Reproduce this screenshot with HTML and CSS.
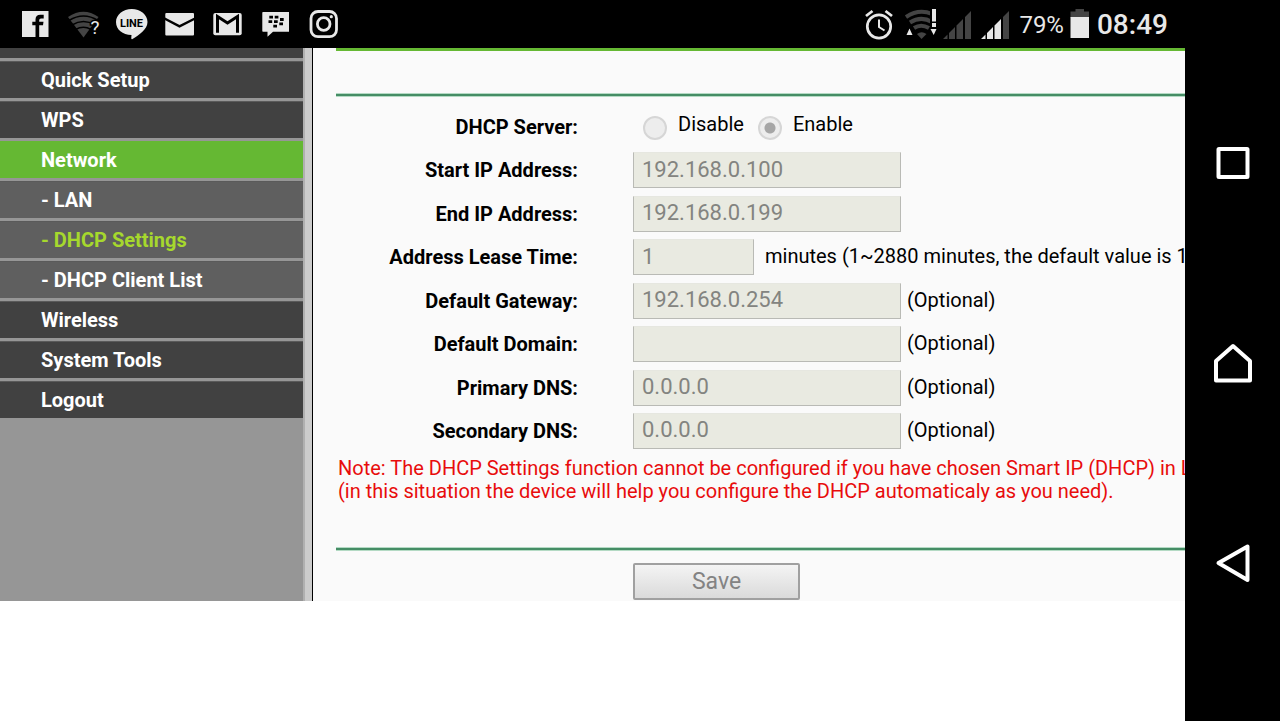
FILE: index.html
```html
<!DOCTYPE html>
<html lang="en">
<head>
<meta charset="utf-8">
<meta name="viewport" content="width=device-width, initial-scale=1">
<title>DHCP Settings</title>
<link rel="stylesheet" href="styles.css">
</head>
<body>
<div class="device">
  <div class="screen">
    <header class="status">
      <div class="status-group">
        <svg class="notif" viewBox="0 0 48 48" aria-label="Facebook"><rect x="11" y="11" width="26.500" height="26" fill="#e8e8e8"/><path d="M24.500 37V25.300H21.300V21.700H24.500V19.500Q24.500 14.800 29.300 14.800H32.700V18.400H30Q28.200 18.400 28.200 20.200V21.700H32.500L32 25.300H28.200V37Z" fill="#000"/></svg>
        <svg class="notif" viewBox="0 0 48 48" aria-label="Wi-Fi available"><path d="M9 17Q24.500 6.500 39.500 17L24.500 37.500Z" fill="#444"/><path d="M10 20.500Q24.500 11.500 39 20.500M13 25Q24.500 18 36 25M16.500 29.500Q24.500 25 32 29.500" fill="none" stroke="#000" stroke-width="1.500"/><text x="36" y="34" class="question">?</text></svg>
        <svg class="notif" viewBox="0 0 48 48" aria-label="LINE"><path d="M24.700 9C33.500 9 40.500 14.800 40.500 22C40.500 29.500 32 35 25.500 39Q24 39.700 24.300 37.500L24.500 35C15.500 35 9 29.500 9 22C9 14.800 16 9 24.700 9Z" fill="#e8e8e8"/><text x="24.500" y="26.500" class="line-logo">LINE</text></svg>
        <svg class="notif" viewBox="0 0 48 48" aria-label="Mail"><rect x="10.300" y="13" width="28.700" height="22.500" rx="1" fill="#e8e8e8"/><path d="M9.500 18.500L24.500 26.300L40 18.500" fill="none" stroke="#000" stroke-width="2.500"/></svg>
        <svg class="notif" viewBox="0 0 48 48" aria-label="Gmail"><rect x="10.300" y="13" width="28.400" height="22.300" rx="2" fill="#e8e8e8"/><path d="M14.500 32.700V16.500L24.500 23L34.500 16.500V32.700" fill="none" stroke="#000" stroke-width="3"/></svg>
        <svg class="notif" viewBox="0 0 48 48" aria-label="BBM"><path d="M12 12H38V31.700H22L16.500 36.700V31.700H12Q11.300 31.700 11.300 31V12.700Q11.300 12 12 12Z" fill="#e8e8e8"/><path d="M18.300 17.200H22M23.700 17.200H27.400M17.500 21.700H21.200M23 21.700H26.700M29 19.500H32.700M28.300 23.800H32M22.300 26.200H26" stroke="#000" stroke-width="2.800"/></svg>
        <svg class="notif" viewBox="0 0 48 48" aria-label="Instagram"><rect x="12" y="11.500" width="25.500" height="25.200" rx="7" fill="none" stroke="#e8e8e8" stroke-width="2.800"/><circle cx="24.700" cy="24" r="6.300" fill="none" stroke="#e8e8e8" stroke-width="2.800"/><circle cx="32.300" cy="16.700" r="1.600" fill="#e8e8e8"/></svg>
      </div>
      <div class="status-group status-right">
        <svg class="alarm" viewBox="0 0 28 32" aria-label="Alarm"><circle cx="14" cy="18.500" r="11.700" fill="none" stroke="#e8e8e8" stroke-width="2.700"/><path d="M14 11.500V19L19.500 22.500" fill="none" stroke="#e8e8e8" stroke-width="2"/><path d="M1 8L7.500 3M20.500 3L27 8" stroke="#e8e8e8" stroke-width="2.800"/></svg>
        <svg class="wifi" viewBox="0 0 32 32" aria-label="Wi-Fi limited"><path d="M1 9Q14 0.500 27 6M5 14.500Q16 7.500 27 14M9 20Q16 15.500 24 20" fill="none" stroke="#444" stroke-width="4"/><path d="M12 26Q16.500 22.500 21.500 26L16.500 31Z" fill="#444"/><path d="M25 0H32V20H25Z" fill="#000"/><path d="M27 1H31V13.500H27ZM27 15H31V19H27ZM1.500 27L4.500 20.500L7.500 27ZM25.500 21L31.500 21L28.700 27Z" fill="#e8e8e8"/></svg>
        <svg class="signal" viewBox="0 0 28 28" aria-label="SIM 1 no signal"><path d="M0 28L4.500 23.500V28ZM6 22L12 16V28H6ZM13.500 14.500L20 8V28H13.500ZM22 6L28 0V28H22Z" fill="#444"/></svg>
        <svg class="signal" viewBox="0 0 28 28" aria-label="SIM 2 signal"><path d="M0 28L4.500 23.500V28ZM6 22L12 16V28H6ZM13.500 14.500L20 8V28H13.500Z" fill="#e8e8e8"/><path d="M22 6L28 0V28H22Z" fill="#444"/></svg>
        <span class="percent">79%</span>
        <svg class="battery" viewBox="0 0 20 30" aria-label="Battery"><path d="M5.500 0H14V2.500H19V9H0.500V2.500H5.500Z" fill="#444"/><rect x="0.500" y="8" width="18.500" height="21" fill="#e8e8e8"/></svg>
        <time class="clock">08:49</time>
      </div>
    </header>

    <div class="page">
      <nav class="menu" aria-label="Router menu">
        <span class="menu-cut"></span>
        <a class="item" href="#quick">Quick Setup</a>
        <a class="item" href="#wps">WPS</a>
        <a class="item active" href="#network">Network</a>
        <a class="item sub" href="#lan">- LAN</a>
        <a class="item sub current" href="#dhcp">- DHCP Settings</a>
        <a class="item sub" href="#clients">- DHCP Client List</a>
        <a class="item" href="#wireless">Wireless</a>
        <a class="item" href="#tools">System Tools</a>
        <a class="item" href="#logout">Logout</a>
      </nav>
      <div class="divider"></div>
      <main class="content">
        <form class="settings">
          <hr class="rule">
          <div class="rows">
            <div class="row" role="radiogroup" aria-labelledby="server">
              <span class="label" id="server">DHCP Server:</span>
              <span class="radios">
                <label class="choice"><input class="radio" type="radio" name="server" disabled><span class="choice-text">Disable</span></label>
                <label class="choice"><input class="radio" type="radio" name="server" checked disabled><span class="choice-text">Enable</span></label>
              </span>
            </div>
            <div class="row"><label class="label" for="start">Start IP Address:</label><input class="field" id="start" type="text" value="192.168.0.100" disabled></div>
            <div class="row"><label class="label" for="end">End IP Address:</label><input class="field" id="end" type="text" value="192.168.0.199" disabled></div>
            <div class="row"><label class="label" for="lease">Address Lease Time:</label><input class="field short" id="lease" type="text" value="1" disabled><span class="hint lease-hint">minutes (1~2880 minutes, the default value is 1</span></div>
            <div class="row"><label class="label" for="gateway">Default Gateway:</label><input class="field" id="gateway" type="text" value="192.168.0.254" disabled><span class="hint">(Optional)</span></div>
            <div class="row"><label class="label" for="domain">Default Domain:</label><input class="field" id="domain" type="text" value="" disabled><span class="hint">(Optional)</span></div>
            <div class="row"><label class="label" for="dns1">Primary DNS:</label><input class="field" id="dns1" type="text" value="0.0.0.0" disabled><span class="hint">(Optional)</span></div>
            <div class="row"><label class="label" for="dns2">Secondary DNS:</label><input class="field" id="dns2" type="text" value="0.0.0.0" disabled><span class="hint">(Optional)</span></div>
          </div>
          <p class="note">Note: The DHCP Settings function cannot be configured if you have chosen Smart IP (DHCP) in L<br>(in this situation the device will help you configure the DHCP automaticaly as you need).</p>
          <hr class="rule">
          <button class="save" type="button" disabled>Save</button>
        </form>
      </main>
    </div>
  </div>

  <nav class="system" aria-label="System navigation">
    <button class="key" type="button" aria-label="Recent apps"><svg viewBox="0 0 40 40"><rect x="5.500" y="6" width="29" height="28" rx="0.500"/></svg></button>
    <button class="key" type="button" aria-label="Home"><svg viewBox="0 0 40 40"><path d="M20 3L37 18V37.500H3V18Z"/></svg></button>
    <button class="key" type="button" aria-label="Back"><svg viewBox="0 0 40 40"><path d="M5.500 20L34.500 3.500V37Z"/></svg></button>
  </nav>
</div>
</body>
</html>
```
FILE: styles.css
```css
* {
  box-sizing: border-box;
}

body {
  margin: 0;
  background: #fff;
  color: #000;
  font-family: Roboto, "Noto Sans", sans-serif;
  font-size: 20px;
  line-height: 24px;
}

.device {
  display: flex;
  min-height: 100vh;
}

.screen {
  flex: 1;
  min-width: 0;
}

/* Status bar */
.status {
  display: flex;
  align-items: center;
  justify-content: space-between;
  height: 48px;
  padding: 0 17px 0 11px;
  background: #000;
  color: #e8e8e8;
}

.status-group {
  display: flex;
  align-items: center;
}

.notif {
  width: 48px;
  height: 48px;
}

.question {
  fill: #e8e8e8;
  font-size: 19px;
  text-anchor: middle;
  stroke: #000;
  stroke-width: 3px;
  paint-order: stroke;
}

.line-logo {
  fill: #000;
  font-size: 11px;
  font-weight: 700;
  text-anchor: middle;
}

.alarm {
  width: 28px;
  height: 32px;
  margin-right: 12px;
}

.wifi {
  width: 32px;
  height: 32px;
  margin-right: 6px;
}

.signal {
  width: 28px;
  height: 28px;
  margin: 2px 10px 0 0;
}

.percent {
  padding-top: 2px;
  margin-right: 6px;
  font-size: 24px;
}

.battery {
  width: 20px;
  height: 30px;
  margin-right: 7px;
}

.clock {
  padding-top: 2px;
  font-size: 28px;
  font-weight: 500;
}

/* Router page */
.page {
  display: flex;
}

.menu {
  display: flex;
  flex-direction: column;
  gap: 3px;
  width: 303px;
  background: #969696;
}

.menu-cut {
  height: 10px;
  background: #414141;
}

.item {
  height: 37px;
  padding-left: 41px;
  border-top: 1px solid #5a5a5a;
  background: #414141;
  color: #fff;
  font-weight: 700;
  line-height: 36px;
  text-decoration: none;
}

.item.active {
  border-color: #65b833;
  background: #65b833;
}

.item.sub {
  background: #5f5f5f;
}

.item.current {
  color: #a6d82d;
}

.divider {
  width: 10px;
  border-left: 2px solid #b0b0b0;
  border-right: 1px solid #000;
  background: #ccc;
}

.content {
  flex: 1;
  min-width: 0;
  padding-left: 23px;
  background: #fafafa;
  overflow: hidden;
}

.settings {
  padding-bottom: 1px;
  border-top: 3px solid #65b833;
}

.rule {
  height: 4px;
  margin: 42px 0 12px;
  border: 1px solid #b4dac4;
  border-width: 1px 0;
  background: #458d65;
}

.rows {
  display: grid;
  align-content: space-between;
  min-height: 340px;
}

.row {
  display: flex;
  align-items: center;
  height: 36px;
}

.label {
  flex: none;
  width: 242px;
  margin-right: 55px;
  font-weight: 700;
  text-align: right;
  white-space: nowrap;
}

.radios {
  display: flex;
  gap: 14px;
  padding-left: 10px;
}

.choice {
  display: flex;
  gap: 11px;
}

.choice-text {
  line-height: 20px;
}

.radio {
  appearance: none;
  width: 24px;
  height: 24px;
  margin: 2px 0 0;
  border: 2px solid #d6d6d6;
  border-radius: 50%;
  background: #ededed;
}

.radio:checked {
  background: radial-gradient(circle, #a6a6a6 5px, #ededed 6px);
}

.field {
  flex: none;
  width: 268px;
  height: 36px;
  padding: 0 8px 2px;
  border: 1px solid #b9bab5;
  border-top-color: #e6e7e0;
  background: #e9eae1;
  color: #838480;
  font: 22px/32px Roboto, "Noto Sans", sans-serif;
}

.short {
  width: 121px;
}

.hint {
  padding: 0 0 2px 6px;
  white-space: nowrap;
}

.lease-hint {
  padding-left: 11px;
}

.note {
  margin: 8px 0 44px 2px;
  color: #e80c0c;
  line-height: 23px;
  white-space: nowrap;
}

.save {
  display: block;
  width: 167px;
  height: 37px;
  margin: 0 0 0 297px;
  padding: 0;
  border: 2px solid #a0a0a0;
  border-radius: 2px;
  background: linear-gradient(#f4f4f4, #dadada);
  color: #838383;
  font: 23px/30px Roboto, "Noto Sans", sans-serif;
}

/* System keys */
.system {
  display: flex;
  flex-direction: column;
  align-items: center;
  justify-content: center;
  gap: 160px;
  width: 95px;
  padding-top: 5px;
  background: #000;
}

.key {
  width: 40px;
  height: 40px;
  padding: 0;
  border: 0;
  background: none;
}

.key svg {
  display: block;
  fill: none;
  stroke: #fff;
  stroke-width: 4px;
  stroke-linejoin: round;
}
```
